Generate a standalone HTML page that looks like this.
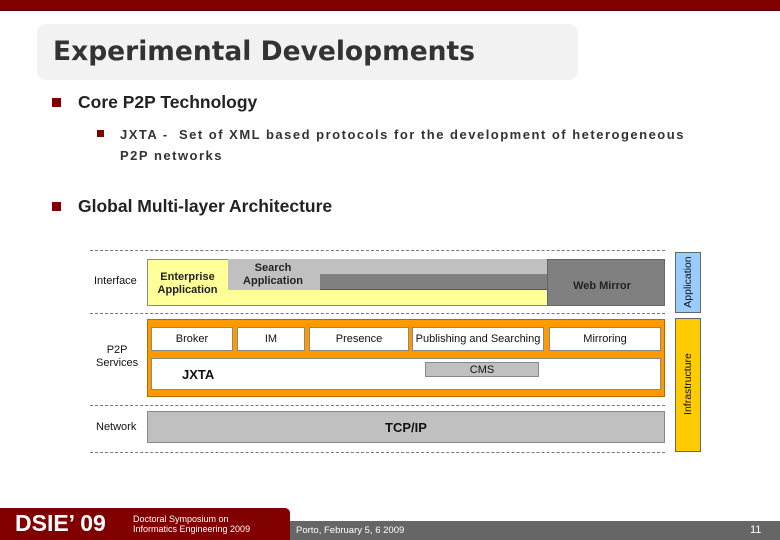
<!DOCTYPE html>
<html><head><style>
*{margin:0;padding:0;box-sizing:border-box}
body{width:780px;height:540px;position:relative;background:#fff;font-family:"Liberation Sans",sans-serif;overflow:hidden}
.a{position:absolute}
.t{font-size:11px;color:#111;text-align:center;line-height:1.15}
.box{position:absolute;background:#fff;border:1px solid #888;display:flex;align-items:center;justify-content:center;font-size:11px;color:#111}
.dash{position:absolute;left:90px;width:575px;border-top:1px dashed #777}
</style></head><body>
<div class="a" style="left:0;top:0;width:780px;height:11px;background:#800000;border-bottom:1px solid #5a0010"></div>
<div class="a" style="left:37px;top:24px;width:541px;height:56px;background:#f2f2f2;border-radius:9px"></div>
<div class="a" style="left:53px;top:36px;font-family:'DejaVu Sans',sans-serif;font-weight:bold;font-size:26.5px;color:#333">Experimental Developments</div>

<div class="a" style="left:52px;top:98px;width:9px;height:9px;background:#800000"></div>
<div class="a" style="left:78px;top:92px;font-size:17.5px;font-weight:bold;color:#222">Core P2P Technology</div>
<div class="a" style="left:97px;top:130px;width:7px;height:7px;background:#800000"></div>
<div class="a" style="left:120px;top:124px;font-size:13px;font-weight:bold;color:#333;letter-spacing:1.5px;line-height:21px">JXTA -&nbsp; Set of XML based protocols for the development of heterogeneous<br>P2P networks</div>
<div class="a" style="left:52px;top:202px;width:9px;height:9px;background:#800000"></div>
<div class="a" style="left:78px;top:196px;font-size:17.5px;font-weight:bold;color:#222">Global Multi-layer Architecture</div>

<div class="dash" style="top:250px"></div>
<div class="dash" style="top:313px"></div>
<div class="dash" style="top:405px"></div>
<div class="dash" style="top:452px"></div>

<div class="a t" style="left:94px;top:275px">Interface</div>
<div class="a t" style="left:96px;top:344px">P2P<br>Services</div>
<div class="a t" style="left:96px;top:421px">Network</div>

<div class="a" style="left:147px;top:259px;width:518px;height:47px;background:#ffff99;border:1px solid #888"></div>
<div class="a" style="left:228px;top:259px;width:319px;height:15px;background:#c0c0c0"></div>
<div class="a" style="left:228px;top:274px;width:92px;height:16px;background:#c0c0c0"></div>
<div class="a" style="left:320px;top:274px;width:227px;height:16px;background:#808080;border-bottom:1px solid #555"></div>
<div class="a" style="left:547px;top:259px;width:118px;height:47px;background:#808080;border:1px solid #666"></div>
<div class="a t" style="left:150px;top:271px;width:75px;font-weight:bold;color:#222">Enterprise<br>Application</div>
<div class="a t" style="left:232px;top:262px;width:82px;font-weight:bold;color:#222">Search<br>Application</div>
<div class="a t" style="left:547px;top:280px;width:110px;font-weight:bold;color:#222">Web Mirror</div>

<div class="a" style="left:675px;top:252px;width:26px;height:61px;background:#99ccff;border:1px solid #666"></div>
<div class="a t" style="left:658px;top:276px;width:60px;transform:rotate(-90deg);font-size:10.5px">Application</div>
<div class="a" style="left:675px;top:318px;width:26px;height:134px;background:#ffcc00;border:1px solid #666"></div>
<div class="a t" style="left:638px;top:378px;width:100px;transform:rotate(-90deg);font-size:10.5px">Infrastructure</div>

<div class="a" style="left:147px;top:319px;width:518px;height:78px;background:#ff9900;border:1px solid #b36b00"></div>
<div class="box" style="left:151px;top:327px;width:82px;height:24px">Broker</div>
<div class="box" style="left:237px;top:327px;width:68px;height:24px">IM</div>
<div class="box" style="left:309px;top:327px;width:100px;height:24px">Presence</div>
<div class="box" style="left:412px;top:327px;width:132px;height:24px">Publishing and Searching</div>
<div class="box" style="left:549px;top:327px;width:112px;height:24px">Mirroring</div>
<div class="box" style="left:151px;top:358px;width:510px;height:32px"></div>
<div class="a" style="left:182px;top:367px;font-size:13px;font-weight:bold;color:#111">JXTA</div>
<div class="box" style="left:425px;top:362px;width:114px;height:15px;background:#c0c0c0">CMS</div>

<div class="a" style="left:147px;top:411px;width:518px;height:32px;background:#c0c0c0;border:1px solid #888;display:flex;align-items:center;justify-content:center;font-weight:bold;font-size:13px;color:#111">TCP/IP</div>

<div class="a" style="left:290px;top:521px;width:490px;height:19px;background:#666"></div>
<div class="a" style="left:0;top:508px;width:290px;height:32px;background:#800000;border-top-right-radius:5px"></div>
<div class="a" style="left:15px;top:510px;font-size:23px;font-weight:bold;color:#fff">DSIE’ 09</div>
<div class="a" style="left:133px;top:514px;font-size:9px;color:#fff;line-height:10px">Doctoral Symposium on<br>Informatics Engineering 2009</div>
<div class="a" style="left:296px;top:525px;font-size:9.5px;color:#fff">Porto, February 5, 6 2009</div>
<div class="a" style="left:750px;top:524px;font-size:11px;color:#fff">11</div>
</body></html>
